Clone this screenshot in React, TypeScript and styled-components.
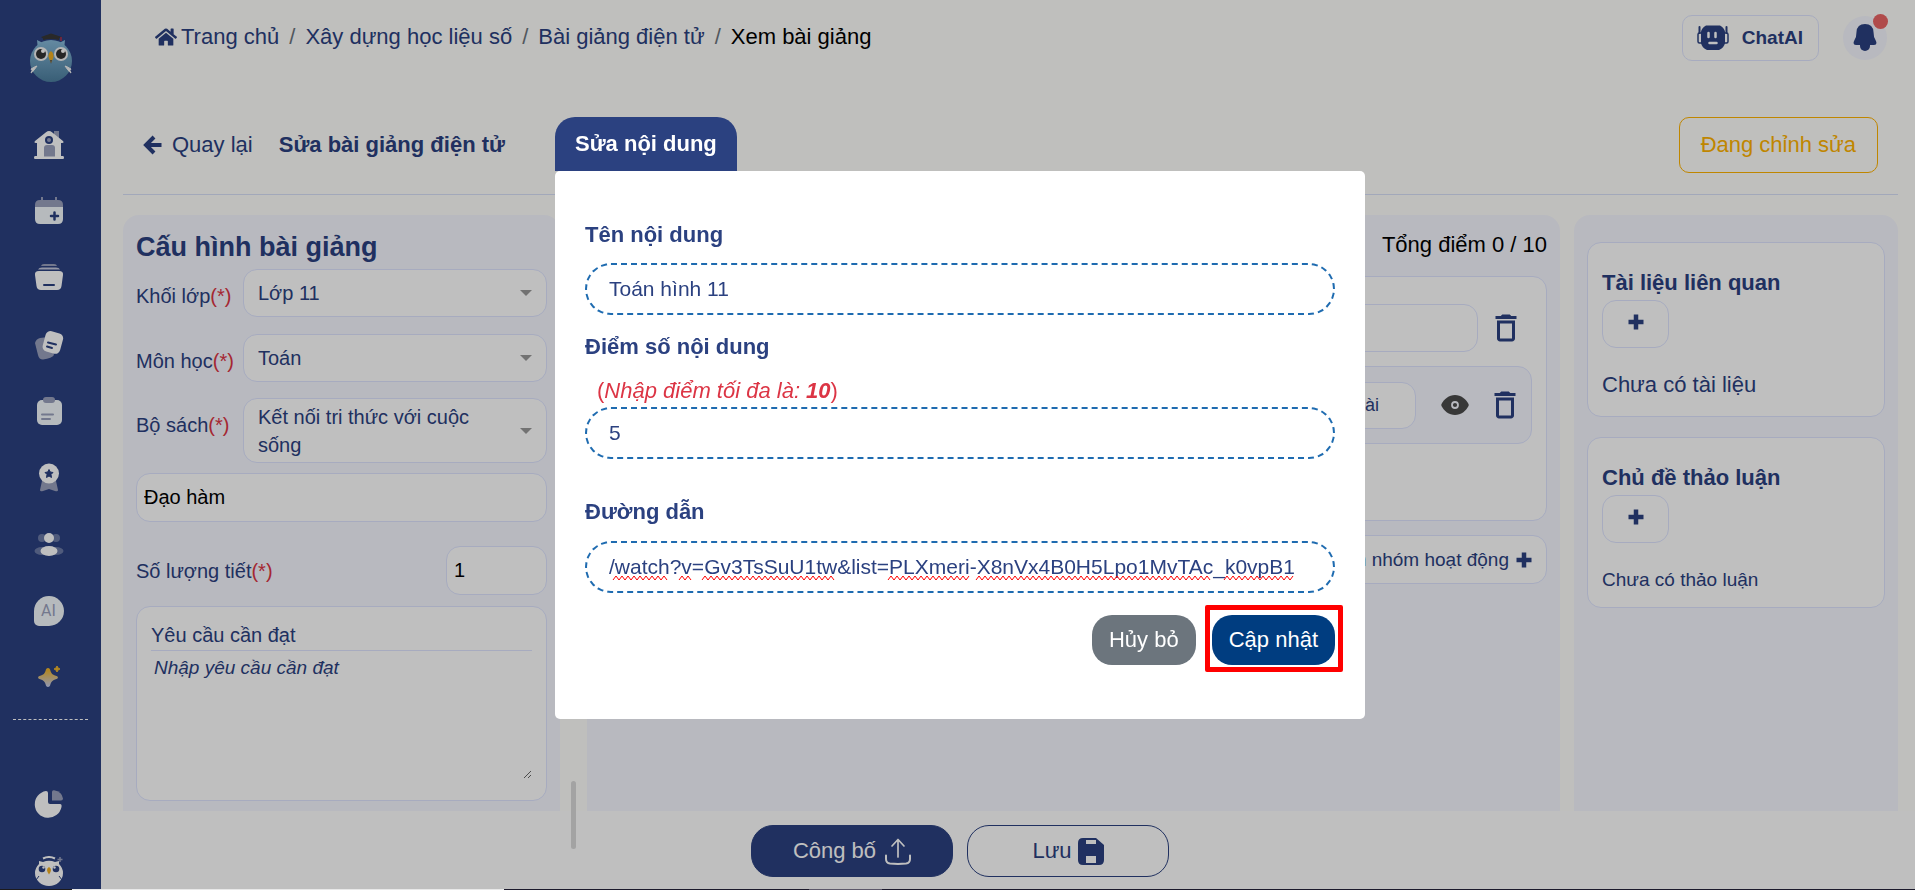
import React, { useState } from "react";
import styled, { createGlobalStyle, css } from "styled-components";
import { FaHome } from "react-icons/fa";
import { MdDeleteOutline } from "react-icons/md";

const color = {
  navy: "#2b4180",
  page: "#fffffc",
  panel: "#f6f7ff",
  border: "#dfe5ff",
  rule: "#d8e0f8",
  danger: "#dc3545",
  amber: "#ffb300",
};

const GlobalStyle = createGlobalStyle`
  *, *::before, *::after { box-sizing: border-box; }
  body { margin: 0; background: ${color.page}; }
  body, button, input, textarea, select {
    font-family: "Liberation Sans", Arial, sans-serif;
    font-size: 20px;
  }
  h1, h2, h3, p { margin: 0; }
`;

/* ---------- page frame ---------- */

const Page = styled.div`
  display: grid;
  grid-template-columns: 101px 1fr;
  grid-template-rows: 1fr 1px;
  min-height: 100vh;
  color: ${color.navy};
`;

const Sidebar = styled.nav`
  display: flex;
  flex-direction: column;
  align-items: center;
  padding: 30px 0 0;
  background: ${color.navy};
`;

const SideLink = styled.a`
  display: block;
  width: 30px;
  height: 30px;
  text-decoration: none;
  svg { display: block; }
`;

const MenuGroup = styled.div<{ $height: number }>`
  display: flex;
  flex-direction: column;
  justify-content: space-between;
  height: ${(p) => p.$height}px;
  margin-right: 4px;
`;

const LogoLink = styled.a`
  height: 54px;
  margin-bottom: 46px;
`;

const SideDivider = styled.hr`
  width: 75px;
  margin: 26px 0 69px;
  border: 0;
  border-top: 1px dashed #ffffff;
`;

const Main = styled.div`
  display: flex;
  flex-direction: column;
  min-width: 0;
`;

const TaskEdge = styled.div`
  position: relative;
  z-index: 2;
  grid-column: 1 / -1;
  display: grid;
  grid-template-columns: 72px 432px 305px 73px 1fr;
  background: #1c1a2c;
`;

const EdgePart = styled.span<{ $tone: string }>`
  background: ${(p) => p.$tone};
`;

/* ---------- top bar ---------- */

const TopBar = styled.header`
  display: flex;
  align-items: center;
  justify-content: space-between;
  height: 75px;
  padding: 0 28px 0 54px;
`;

const Crumbs = styled.ol`
  display: flex;
  align-items: center;
  margin: 0;
  padding: 0 0 2px;
  list-style: none;
  font-size: 22px;
  line-height: 28px;
  li + li::before {
    content: "/";
    padding: 0 10px;
    color: #6c757d;
  }
`;

const Crumb = styled.li<{ $current?: boolean }>`
  display: flex;
  align-items: center;
  color: ${(p) => (p.$current ? "#000" : color.navy)};
  a {
    display: flex;
    align-items: center;
    gap: 4px;
    color: inherit;
    text-decoration: none;
  }
`;

const TopActions = styled.div`
  display: flex;
  align-items: center;
  gap: 24px;
`;

const ChatButton = styled.button`
  display: flex;
  align-items: center;
  gap: 13px;
  height: 46px;
  padding: 0 15px 0 14px;
  border: 1px solid ${color.border};
  border-radius: 10px;
  background: transparent;
  color: ${color.navy};
  font-size: 19px;
  font-weight: 700;
`;

const BellButton = styled.button`
  position: relative;
  width: 44px;
  height: 44px;
  padding: 0;
  border: 0;
  border-radius: 50%;
  background: ${color.panel};
  svg { display: block; margin: 0 auto; }
`;

const BellDot = styled.span`
  position: absolute;
  top: -2px;
  right: -1px;
  width: 15px;
  height: 15px;
  border-radius: 50%;
  background: #eb6464;
`;

/* ---------- lecture title bar ---------- */

const TitleBar = styled.div`
  display: flex;
  align-items: flex-start;
  height: 120px;
  margin: 0 17px 0 22px;
  padding: 42px 20px 0;
  border-bottom: 1px solid ${color.rule};
`;

const BackLink = styled.a`
  display: flex;
  align-items: center;
  gap: 10px;
  height: 56px;
  color: ${color.navy};
  font-size: 22px;
  text-decoration: none;
`;

const LectureTitle = styled.h1`
  margin-left: 26px;
  font-size: 22px;
  line-height: 56px;
`;

const StatusButton = styled.button`
  height: 56px;
  margin-left: auto;
  padding: 0 21px;
  border: 1px solid ${color.amber};
  border-radius: 10px;
  background: transparent;
  color: ${color.amber};
  font-size: 22px;
`;

/* ---------- work area ---------- */

const Workspace = styled.main`
  display: flex;
  flex: 1;
  padding: 20px 17px 0 22px;
`;

const panel = css`
  border-radius: 16px 16px 0 0;
  background: ${color.panel};
`;

const ConfigPanel = styled.section`
  ${panel}
  flex: 0 0 437px;
  padding: 16px 13px 10px;
`;

const Gutter = styled.div`
  position: relative;
  flex: 0 0 27px;
`;

const ScrollThumb = styled.span`
  position: absolute;
  bottom: -38px;
  left: 11px;
  width: 5px;
  height: 68px;
  border-radius: 3px;
  background: #dadada;
`;

const ContentPanel = styled.section`
  ${panel}
  flex: 1;
  min-width: 0;
  margin-right: 14px;
  padding: 14px 13px;
`;

const SidePanel = styled.aside`
  ${panel}
  flex: 0 0 324px;
  display: flex;
  flex-direction: column;
  gap: 20px;
  padding: 27px 13px;
`;

const box = css`
  border: 1px solid ${color.border};
  border-radius: 14px;
  background: #fff;
`;

const ConfigTitle = styled.h2`
  height: 38px;
  font-size: 27px;
  line-height: 32px;
`;

const FieldRow = styled.div<{ $gap: number }>`
  display: grid;
  grid-template-columns: 107px 1fr;
  align-items: start;
  margin-bottom: ${(p) => p.$gap}px;
  label { padding-top: 13px; }
`;

const FieldLabel = styled.label`
  line-height: 28px;
  white-space: nowrap;
`;

const Required = styled.span`
  color: ${color.danger};
`;

const SelectShell = styled.div`
  ${box}
  position: relative;
`;

const SelectBox = styled.select<{ $tall?: boolean }>`
  display: flex;
  align-items: center;
  width: 100%;
  height: ${(p) => (p.$tall ? 63 : 46)}px;
  padding: 0 60px 0 14px;
  border: 0;
  border-radius: 14px;
  background: transparent;
  color: ${color.navy};
  appearance: base-select;
  line-height: 28px;
  white-space: normal;
  text-align: left;
  &::picker-icon { display: none; }
`;

const Caret = styled.span`
  position: absolute;
  right: 14px;
  top: 50%;
  margin-top: -3px;
  border: 6px solid transparent;
  border-top-color: #999;
  border-bottom: 0;
  pointer-events: none;
`;

const TextField = styled.input`
  ${box}
  width: 100%;
  height: 49px;
  padding: 0 7px;
  color: #000;
`;

const CountRow = styled.div`
  display: grid;
  grid-template-columns: 1fr 101px;
  align-items: center;
  margin: 24px 0 11px;
`;

const GoalBox = styled.div`
  ${box}
  height: 195px;
  padding: 14px;
`;

const GoalLabel = styled.label`
  display: block;
  height: 30px;
  border-bottom: 1px solid ${color.border};
  line-height: 28px;
`;

const GoalText = styled.textarea`
  display: block;
  width: 100%;
  height: 128px;
  padding: 5px 3px;
  border: 0;
  outline: 0;
  background: transparent;
  font-size: 19px;
  font-style: italic;
  line-height: 24px;
  &::placeholder { color: ${color.navy}; opacity: 1; }
`;

/* ---------- content column ---------- */

const ScoreTotal = styled.p`
  margin-bottom: 15px;
  color: #000;
  font-size: 22px;
  line-height: 32px;
  text-align: right;
`;

const GroupCard = styled.div`
  ${box}
  height: 245px;
  padding: 27px 14px;
`;

const GroupHead = styled.div`
  display: flex;
  align-items: center;
  gap: 10px;
  margin-bottom: 14px;
  padding-right: 8px;
  input { height: 48px; }
`;

const IconButton = styled.button`
  display: flex;
  flex: none;
  padding: 0;
  border: 0;
  background: transparent;
  color: ${color.navy};
`;

const ActivityRow = styled.div`
  ${box}
  display: flex;
  align-items: center;
  gap: 18px;
  height: 78px;
  padding: 0 8px 0 14px;
  background: ${color.panel};
  input { height: 47px; }
`;

const LinkType = styled.button`
  ${box}
  height: 47px;
  margin-right: 7px;
  padding: 0 36px;
  color: ${color.navy};
  font-size: 18px;
  white-space: nowrap;
`;

const AddGroup = styled.button`
  ${box}
  display: flex;
  align-items: center;
  gap: 7px;
  height: 49px;
  margin: 14px 0 0 auto;
  padding: 0 14px;
  color: ${color.navy};
  font-size: 19px;
`;

/* ---------- related column ---------- */

const SideCard = styled.div<{ $height: number }>`
  ${box}
  height: ${(p) => p.$height}px;
  padding: 26px 14px 0;
`;

const SideTitle = styled.h3`
  margin-bottom: 3px;
  font-size: 22px;
  line-height: 28px;
`;

const SquareButton = styled.button`
  ${box}
  display: flex;
  justify-content: center;
  align-items: flex-start;
  width: 67px;
  height: 48px;
  padding: 13px 0 0;
  color: ${color.navy};
`;

const SideNote = styled.p<{ $small?: boolean }>`
  margin-top: 23px;
  font-size: ${(p) => (p.$small ? 19 : 22)}px;
  line-height: 28px;
`;

/* ---------- footer ---------- */

const FooterBar = styled.footer`
  display: flex;
  justify-content: center;
  gap: 14px;
  height: 78px;
  padding: 14px 96px 0 0;
  background: #fff;
`;

const FooterButton = styled.button<{ $solid?: boolean }>`
  display: flex;
  align-items: center;
  justify-content: center;
  gap: ${(p) => (p.$solid ? 9 : 6)}px;
  width: 202px;
  height: 52px;
  padding: 0;
  border: 1px solid ${color.navy};
  border-radius: 22px;
  background: ${(p) => (p.$solid ? color.navy : "transparent")};
  color: ${(p) => (p.$solid ? "#fff" : color.navy)};
  font-size: 22px;
`;

/* ---------- dialog ---------- */

const Overlay = styled.div`
  position: fixed;
  inset: 0;
  z-index: 1;
  display: flex;
  flex-direction: column;
  align-items: center;
  padding-top: 117px;
  background: rgba(0, 0, 0, 0.25);
`;

const Dialog = styled.form`
  width: 810px;
  margin-left: 5px;
`;

const DialogTab = styled.h2`
  width: max-content;
  height: 54px;
  padding: 0 20px;
  border-radius: 20px 20px 0 0;
  background: ${color.navy};
  color: #fff;
  font-size: 22px;
  line-height: 54px;
`;

const DialogBody = styled.div`
  padding: 48px 30px 54px;
  border-radius: 5px;
  background: #fff;
`;

const DialogLabel = styled.label<{ $bottom: number }>`
  display: block;
  margin-bottom: ${(p) => p.$bottom}px;
  color: ${color.navy};
  font-size: 22px;
  font-weight: 700;
  line-height: 32px;
`;

const Hint = styled.p`
  padding-left: 12px;
  color: ${color.danger};
  font-size: 22px;
  line-height: 32px;
`;

const DashedInput = styled.input`
  display: block;
  width: 100%;
  height: 52px;
  padding: 0 22px;
  border: 2px dashed #1e6bb0;
  border-radius: 26px;
  outline: 0;
  color: ${color.navy};
  font-size: 21px;
`;

const DialogField = styled.div<{ $bottom: number }>`
  margin-bottom: ${(p) => p.$bottom}px;
`;

const SpellWrap = styled.div`
  position: relative;
  svg { position: absolute; left: 24px; top: 34px; pointer-events: none; }
`;

const DialogActions = styled.div`
  display: flex;
  justify-content: flex-end;
  gap: 16px;
`;

const PillButton = styled.button<{ $primary?: boolean }>`
  height: 50px;
  padding: 0 17px;
  border: 0;
  border-radius: 20px;
  background: ${(p) => (p.$primary ? "#003d80" : "#6c757d")};
  color: #fff;
  font-size: 22px;
`;

const Highlight = styled.span`
  position: relative;
  &::after {
    content: "";
    position: absolute;
    inset: -10px -8px -7px -7px;
    border: 5px solid #ff0000;
    border-radius: 2px;
    pointer-events: none;
  }
`;

/* ---------- drawings ---------- */

const dim = "#9aa0bd";

const OwlLogo = () => (
  <svg width="44" height="52" viewBox="0 0 44 52" aria-hidden="true">
    <defs>
      <linearGradient id="owl" x1="0" y1="0" x2="0" y2="1">
        <stop offset="0" stopColor="#86b8d8" />
        <stop offset="1" stopColor="#4c7e9e" />
      </linearGradient>
    </defs>
    <path d="M8 10 L14 13 L9 20 Z M36 10 L30 13 L35 20 Z" fill="#86b8d8" />
    <circle cx="22" cy="31" r="21" fill="url(#owl)" />
    <path d="M8 36 Q3 43 2 43 Q4 40 2 39 Q7 36 8 36 M36 36 Q41 43 42 43 Q40 40 42 39 Q37 36 36 36" fill="#f4f4f4" stroke="#f4f4f4" />
    <circle cx="12" cy="24" r="7" fill="#f2f2f2" />
    <circle cx="32" cy="24" r="7" fill="#f2f2f2" />
    <circle cx="12" cy="24" r="5" fill="#333" />
    <circle cx="32" cy="24" r="5" fill="#333" />
    <circle cx="14" cy="21" r="2" fill="#fff" />
    <circle cx="34" cy="21" r="2" fill="#fff" />
    <path d="M22 21 Q27 24 22 33 Q17 24 22 21" fill="#f0ae20" />
    <path d="M21 30 h2 l-1 4z" fill="#555" />
    <path d="M12 7 L22 3.500 L33 7 L30 8.500 V10 Q22 8 14 10 V8.500Z" fill="#373737" />
    <path d="M32 7 v4" stroke="#b5304a" strokeWidth="1.500" />
  </svg>
);

const Svg30 = ({ children }: { children: React.ReactNode }) => (
  <svg width="30" height="30" viewBox="0 0 30 30" fill="#fff" aria-hidden="true">
    {children}
  </svg>
);

const HouseIcon = () => (
  <Svg30>
    <rect x="20" y="1" width="5" height="10" fill={dim} />
    <path d="M15 1 Q16.500 1 18 2.200 L29 11 Q30.500 13 28 13 H27 V26 H29 Q30 26 30 27.500 Q30 29 29 29 H1 Q0 29 0 27.500 Q0 26 1 26 H3 V13 H2 Q-.5 13 1 11 L12 2.200 Q13.500 1 15 1Z" />
    <circle cx="15" cy="10" r="4" fill={color.navy} />
    <circle cx="15" cy="10" r="2" fill={dim} />
    <path d="M10 26.500 V18 Q10 15 13 15 H18 Q21 15 21 18 V26.500Z" fill={dim} />
  </Svg30>
);

const CalendarIcon = () => (
  <Svg30>
    <path d="M8 0 V5 M22 0 V5" stroke={dim} strokeWidth="2" />
    <path d="M1 10 V8 Q1 3 6 3 H24 Q29 3 29 8 V10Z" fill={dim} />
    <path d="M1 10 H29 V22 Q29 27 24 27 H6 Q1 27 1 22Z" fill="#f3f9fc" />
    <path d="M20.500 15.500 V22.500 M17 19 H24" stroke={color.navy} strokeWidth="2.500" strokeLinecap="round" />
  </Svg30>
);

const StackIcon = () => (
  <Svg30>
    <path d="M7 3 Q7.500 1 10 1 H20 Q22.500 1 23 3Z" fill={dim} />
    <path d="M4 6.500 Q5 4.500 8 4.500 H22 Q25 4.500 26 6.500Z" fill="#c5c9dc" />
    <path d="M5 8 H25 Q29.500 8 29 12 L27.500 23 Q27 27 23 27 H7 Q3 27 2.500 23 L1 12 Q.5 8 5 8Z" />
    <path d="M10 22 H20" stroke={color.navy} strokeWidth="2" strokeLinecap="round" />
  </Svg30>
);

const CardsIcon = () => (
  <Svg30>
    <path d="M1 13 Q2 9 6 8 L14 7 L20 25 Q18 28 9 29.500 Q5 29.500 4 25Z" fill={dim} />
    <rect x="10" y="2" width="18" height="21" rx="5" transform="rotate(15 19 12)" />
    <path d="M14 12.500 L22 14.500 M13 16.500 L18 18" stroke={color.navy} strokeWidth="2" strokeLinecap="round" />
  </Svg30>
);

const ClipboardIcon = () => (
  <Svg30>
    <rect x="3" y="3" width="25" height="25" rx="5" fill="#f3f9fc" />
    <rect x="9" y="0" width="12" height="6" rx="3" fill={dim} />
    <path d="M8 17.500 H19 M8 22 H16" stroke={dim} strokeWidth="2" strokeLinecap="round" />
  </Svg30>
);

const BadgeIcon = () => (
  <Svg30>
    <path d="M8 18 H22 L24 27 Q24 29 21 28 L15 26 L9 28 Q6 29 6 27Z" fill={dim} />
    <circle cx="15" cy="10.500" r="10" />
    <path d="M15 6.500 L16.300 9 L19 9.500 L17 11.500 L17.500 14.500 L15 13 L12.500 14.500 L13 11.500 L11 9.500 L13.700 9Z" fill={color.navy} stroke={color.navy} />
  </Svg30>
);

const PeopleIcon = () => (
  <Svg30>
    <circle cx="8" cy="8" r="4" fill="#6b7aa6" />
    <circle cx="22" cy="8" r="4" fill="#6b7aa6" />
    <ellipse cx="8" cy="21" rx="7.500" ry="4" fill="#6b7aa6" />
    <ellipse cx="22" cy="21" rx="7.500" ry="4" fill="#6b7aa6" />
    <circle cx="15" cy="8" r="5" />
    <ellipse cx="15" cy="21" rx="8.500" ry="5" />
  </Svg30>
);

const AiLabel = styled.span`
  display: flex;
  align-items: center;
  justify-content: center;
  width: 30px;
  height: 30px;
  border-radius: 50% 50% 50% 5px;
  background: #f3f9fc;
  color: ${dim};
  font: 16px/30px Roboto, sans-serif;
`;

const SparkleIcon = () => (
  <Svg30>
    <defs>
      <linearGradient id="spark" x1="0" y1="0" x2="0" y2="1">
        <stop offset="0.100" stopColor="#efb42c" />
        <stop offset="1" stopColor="#c0caf0" />
      </linearGradient>
    </defs>
    <path d="M14 5 Q16 5 16.500 8 Q17.500 11.500 21 12.500 Q24 13 24 14.500 Q24 16 21 16.500 Q17.500 17.500 16.500 21 Q16 24 14 24 Q12 24 11.500 21 Q10.500 17.500 7 16.500 Q4 16 4 14.500 Q4 13 7 12.500 Q10.500 11.500 11.500 8 Q12 5 14 5Z" fill="url(#spark)" />
    <path d="M23 3 L24 5 L26 6 L24 7 L23 9 L22 7 L20 6 L22 5Z" fill="#efb42c" stroke="#efb42c" strokeLinejoin="round" />
  </Svg30>
);

const PieIcon = () => (
  <Svg30>
    <path d="M12 2 Q14 2 14 4 V13 Q14 15 16 15 H26 Q28 15 27.500 18 A13.500 13.500 0 1 1 12 2Z" />
    <path d="M18 3 Q18 1 20 1.200 Q28 2.500 29 9.500 Q29 11.500 27 11.500 H18Z" fill={dim} />
  </Svg30>
);

const OwlIcon = () => (
  <Svg30>
    <path d="M5 5 L9 6 Q15 3.500 21 6 L25 5 V8 Q29 12 29 17 A14 13 0 1 1 1 17 Q1 12 5 8Z" />
    <path d="M9 2.500 Q15 -.5 21 2.500" stroke="#fff" strokeWidth="2" fill="none" />
    <path d="M26 1 V6 M23.500 3.500 H28.500" stroke={dim} strokeWidth="1.500" />
    <circle cx="8" cy="13" r="3.300" fill={color.navy} />
    <circle cx="22" cy="13" r="3.300" fill={color.navy} />
    <circle cx="9.500" cy="11.500" r="1.200" />
    <circle cx="20.500" cy="11.500" r="1.200" />
    <path d="M15 11 Q19 13 15 18.500 Q11 13 15 11" fill="#f0ae20" />
    <path d="M2 24 L5 20 M28 24 L25 20" stroke={color.navy} />
  </Svg30>
);

const RobotIcon = () => (
  <svg width="32" height="26" viewBox="0 0 32 26" fill={color.navy} aria-hidden="true">
    <rect x="1" y="8" width="6" height="10" rx="1.500" fill="#fff" stroke={color.navy} strokeWidth="1.500" />
    <rect x="25" y="8" width="6" height="10" rx="1.500" fill="#fff" stroke={color.navy} strokeWidth="1.500" />
    <path d="M2.500 2 V8 M29.500 2 V8" stroke={color.navy} strokeWidth="2" strokeLinecap="round" />
    <path d="M9 0.500 H23 Q28 3 28 8 V18 Q27 23 22 25 H10 Q5 23 4 18 V8 Q4 3 9 0.500Z" />
    <path d="M11.500 8 V12 M18.500 8 V12" stroke="#fff" strokeWidth="2.500" strokeLinecap="round" />
    <path d="M12.500 18 H19.500" stroke="#fff" strokeWidth="2.500" strokeLinecap="round" />
  </svg>
);

const BellIcon = () => (
  <svg width="24" height="27" viewBox="0 0 24 27" fill={color.navy} aria-hidden="true">
    <path d="M12 0 Q20 0 20.500 8 Q20.500 13 22.500 16 Q25 21 21 21 H3 Q-1 21 1.500 16 Q3.500 13 3.500 8 Q4 0 12 0Z" />
    <path d="M7 20 H17 V22 A5 5 0 0 1 7 22Z" />
  </svg>
);

const ArrowIcon = () => (
  <svg width="19" height="20" viewBox="0 0 19 20" fill="none" stroke={color.navy} strokeWidth="4" aria-hidden="true">
    <path d="M18.500 10 H4 M11 2 L3 10 L11 18" />
  </svg>
);

const PlusIcon = () => (
  <svg width="16" height="16" viewBox="0 0 16 16" fill="none" stroke={color.navy} strokeWidth="4.500" aria-hidden="true">
    <path d="M8 0.500 V15.500 M0.500 8 H15.500" />
  </svg>
);

const EyeIcon = () => (
  <svg width="28" height="20" viewBox="0 0 28 20" aria-hidden="true">
    <path d="M14 0 C20 0 25 4 27.500 9 Q28 10 27.500 11 C25 16 20 20 14 20 C8 20 3 16 0.500 11 Q0 10 0.500 9 C3 4 8 0 14 0Z" fill="#4b4b4b" />
    <circle cx="14" cy="10" r="3" fill="#4b4b4b" stroke="#f6f7ff" strokeWidth="1.800" />
  </svg>
);

const UploadIcon = () => (
  <svg width="26" height="27" viewBox="0 0 26 27" fill="none" stroke="#fff" strokeWidth="2" strokeLinecap="round" strokeLinejoin="round" aria-hidden="true">
    <path d="M13 19 V2 M7 8 L13 1.500 L19 8" strokeWidth="1.700" />
    <path d="M1 17.500 V21 Q1 25 5 25.500 Q13 26.300 21 25.500 Q25 25 25 21 V17.500" />
  </svg>
);

const FloppyIcon = () => (
  <svg width="26" height="27" viewBox="0 0 26 27" aria-hidden="true">
    <path d="M5 0 H18 L26 7 V22 Q26 27 21 27 H5 Q0 27 0 22 V5 Q0 0 5 0Z" fill={color.navy} />
    <path d="M8 2 H18 V6 H8Z M8 18 H18 V25 H8Z" fill="#fff" />
  </svg>
);

const misspelt = [[4, 58], [70, 82], [93, 226], [279, 360], [367, 603], [615, 686]];

const zigzag = ([from, to]: number[]) => {
  let d = `M${from} 5`;
  for (let x = from + 3, up = true; x <= to; x += 3, up = !up) d += ` L${x} ${up ? 1 : 5}`;
  return d;
};

const SpellMarks = () => (
  <svg width="690" height="6" fill="none" stroke="#ff0000" aria-hidden="true">
    {misspelt.map((range) => (
      <path key={range[0]} d={zigzag(range)} />
    ))}
  </svg>
);

/* ---------- data ---------- */

const menu = [
  { name: "Trang chủ", icon: <HouseIcon /> },
  { name: "Lịch", icon: <CalendarIcon /> },
  { name: "Kho học liệu", icon: <StackIcon /> },
  { name: "Thẻ bài", icon: <CardsIcon /> },
  { name: "Nhiệm vụ", icon: <ClipboardIcon /> },
  { name: "Thành tích", icon: <BadgeIcon /> },
  { name: "Lớp học", icon: <PeopleIcon /> },
  { name: "Trợ lý", icon: <AiLabel>AI</AiLabel> },
  { name: "Khám phá", icon: <SparkleIcon /> },
];

const extraMenu = [
  { name: "Thống kê", icon: <PieIcon /> },
  { name: "Hỗ trợ", icon: <OwlIcon /> },
];

const selects = [
  { id: "grade", label: "Khối lớp", value: "Lớp 11", gap: 17 },
  { id: "subject", label: "Môn học", value: "Toán", gap: 16 },
  { id: "book", label: "Bộ sách", value: "Kết nối tri thức với cuộc sống", gap: 10, tall: true },
];

const MenuItem = ({ name, icon }: { name: string; icon: React.ReactNode }) => (
  <SideLink href="#" aria-label={name}>{icon}</SideLink>
);

export default function App() {
  const [name, setName] = useState("Toán hình 11");
  const [score, setScore] = useState("5");
  const [link, setLink] = useState("/watch?v=Gv3TsSuU1tw&list=PLXmeri-X8nVx4B0H5Lpo1MvTAc_k0vpB1");

  return (
    <>
      <GlobalStyle />
      <Page>
        <Sidebar>
          <LogoLink href="#" aria-label="Logo"><OwlLogo /></LogoLink>
          <MenuGroup $height={563}>
            {menu.map((item) => <MenuItem key={item.name} {...item} />)}
          </MenuGroup>
          <SideDivider />
          <MenuGroup $height={97}>
            {extraMenu.map((item) => <MenuItem key={item.name} {...item} />)}
          </MenuGroup>
        </Sidebar>

        <Main>
          <TopBar>
            <Crumbs>
              <Crumb><a href="#"><FaHome size={22} />Trang chủ</a></Crumb>
              <Crumb><a href="#">Xây dựng học liệu số</a></Crumb>
              <Crumb><a href="#">Bài giảng điện tử</a></Crumb>
              <Crumb $current>Xem bài giảng</Crumb>
            </Crumbs>
            <TopActions>
              <ChatButton type="button"><RobotIcon />ChatAI</ChatButton>
              <BellButton type="button" aria-label="Thông báo"><BellIcon /><BellDot /></BellButton>
            </TopActions>
          </TopBar>

          <TitleBar>
            <BackLink href="#"><ArrowIcon />Quay lại</BackLink>
            <LectureTitle>Sửa bài giảng điện tử</LectureTitle>
            <StatusButton type="button">Đang chỉnh sửa</StatusButton>
          </TitleBar>

          <Workspace>
            <ConfigPanel>
              <ConfigTitle>Cấu hình bài giảng</ConfigTitle>
              {selects.map((s) => (
                <FieldRow key={s.id} $gap={s.gap}>
                  <FieldLabel htmlFor={s.id}>{s.label}<Required>(*)</Required></FieldLabel>
                  <SelectShell>
                    <SelectBox id={s.id} $tall={s.tall}><option>{s.value}</option></SelectBox>
                    <Caret />
                  </SelectShell>
                </FieldRow>
              ))}
              <TextField aria-label="Tên bài giảng" defaultValue="Đạo hàm" />
              <CountRow>
                <FieldLabel htmlFor="lessons">Số lượng tiết<Required>(*)</Required></FieldLabel>
                <TextField id="lessons" defaultValue="1" />
              </CountRow>
              <GoalBox>
                <GoalLabel htmlFor="goal">Yêu cầu cần đạt</GoalLabel>
                <GoalText id="goal" placeholder="Nhập yêu cầu cần đạt" />
              </GoalBox>
            </ConfigPanel>
            <Gutter><ScrollThumb /></Gutter>

            <ContentPanel>
              <ScoreTotal>Tổng điểm 0 / 10</ScoreTotal>
              <GroupCard>
                <GroupHead>
                  <TextField aria-label="Tên nhóm hoạt động" />
                  <IconButton type="button" aria-label="Xóa nhóm"><MdDeleteOutline size={36} /></IconButton>
                </GroupHead>
                <ActivityRow>
                  <TextField aria-label="Tên hoạt động" />
                  <LinkType type="button">Link ngoài</LinkType>
                  <IconButton type="button" aria-label="Xem"><EyeIcon /></IconButton>
                  <IconButton type="button" aria-label="Xóa hoạt động"><MdDeleteOutline size={36} /></IconButton>
                </ActivityRow>
              </GroupCard>
              <AddGroup type="button">Thêm nhóm hoạt động<PlusIcon /></AddGroup>
            </ContentPanel>

            <SidePanel>
              <SideCard $height={175}>
                <SideTitle>Tài liệu liên quan</SideTitle>
                <SquareButton type="button" aria-label="Thêm tài liệu"><PlusIcon /></SquareButton>
                <SideNote>Chưa có tài liệu</SideNote>
              </SideCard>
              <SideCard $height={171}>
                <SideTitle>Chủ đề thảo luận</SideTitle>
                <SquareButton type="button" aria-label="Thêm chủ đề"><PlusIcon /></SquareButton>
                <SideNote $small>Chưa có thảo luận</SideNote>
              </SideCard>
            </SidePanel>
          </Workspace>

          <FooterBar>
            <FooterButton type="button" $solid>Công bố<UploadIcon /></FooterButton>
            <FooterButton type="button">Lưu<FloppyIcon /></FooterButton>
          </FooterBar>
        </Main>

        <TaskEdge>
          <EdgePart $tone="#1c1a1c" />
          <EdgePart $tone="#e8e8e8" />
          <EdgePart $tone="#1c1a2c" />
          <EdgePart $tone="#5c586a" />
          <EdgePart $tone="#1c1a2c" />
        </TaskEdge>
      </Page>

      <Overlay>
        <Dialog role="dialog" aria-labelledby="dialog-title" onSubmit={(e) => e.preventDefault()}>
          <DialogTab id="dialog-title">Sửa nội dung</DialogTab>
          <DialogBody>
            <DialogField $bottom={16}>
              <DialogLabel htmlFor="name" $bottom={12}>Tên nội dung</DialogLabel>
              <DashedInput id="name" value={name} onChange={(e) => setName(e.target.value)} />
            </DialogField>
            <DialogField $bottom={37}>
              <DialogLabel htmlFor="score" $bottom={12}>Điểm số nội dung</DialogLabel>
              <Hint>(<i>Nhập điểm tối đa là: <b>10</b></i>)</Hint>
              <DashedInput id="score" value={score} onChange={(e) => setScore(e.target.value)} />
            </DialogField>
            <DialogField $bottom={22}>
              <DialogLabel htmlFor="link" $bottom={13}>Đường dẫn</DialogLabel>
              <SpellWrap>
                <DashedInput id="link" value={link} onChange={(e) => setLink(e.target.value)} />
                <SpellMarks />
              </SpellWrap>
            </DialogField>
            <DialogActions>
              <PillButton type="button">Hủy bỏ</PillButton>
              <Highlight><PillButton type="submit" $primary>Cập nhật</PillButton></Highlight>
            </DialogActions>
          </DialogBody>
        </Dialog>
      </Overlay>
    </>
  );
}
